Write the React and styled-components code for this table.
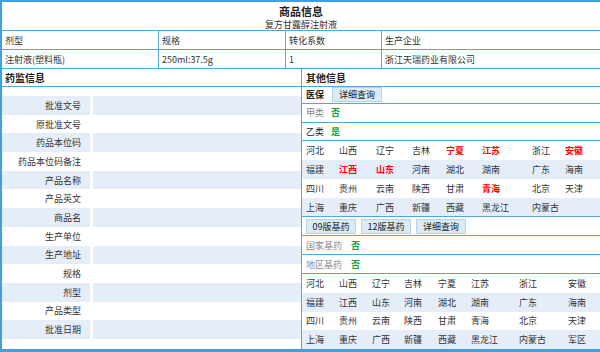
import React from "react";
import styled, { createGlobalStyle } from "styled-components";

const BLUE = "#3f9fe0";
const LINE = "#52a7e3";
const ROW = "#e5edf9";

const Global = createGlobalStyle`
  html, body { margin: 0; padding: 0; background: #fff; }
  body {
    font-family: "Noto Sans CJK SC", "Noto Sans", sans-serif;
    font-size: 9px;
    color: #333;
  }
`;

const Page = styled.div`
  width: 600px;
  height: 352px;
  box-sizing: border-box;
  border-top: 2px solid ${BLUE};
  border-left: 2px solid ${BLUE};
  border-bottom: 3px solid ${BLUE};
  display: flex;
  flex-direction: column;
  overflow: hidden;
`;

const TitleBlock = styled.div`
  height: 29px;
  box-sizing: border-box;
  padding-top: 2px;
  border-bottom: 1px solid ${LINE};
  display: flex;
  flex-direction: column;
  align-items: center;
`;

const Title = styled.div`
  font-size: 11px;
  font-weight: bold;
  line-height: 15px;
  color: #222;
`;

const Subtitle = styled.div`
  font-size: 9px;
  line-height: 11px;
  color: #333;
`;

const InfoGrid = styled.div`
  display: grid;
  grid-template-columns: 157px 127px 96px 1fr;
`;

const InfoCell = styled.div`
  height: 19px;
  box-sizing: border-box;
  border-bottom: 1px solid ${LINE};
  border-right: ${(p) => (p.$last ? "none" : `1px solid ${LINE}`)};
  padding-left: 3px;
  display: flex;
  align-items: center;
  white-space: nowrap;
`;

const Split = styled.div`
  flex: 1;
  display: flex;
  min-height: 0;
`;

const LeftCol = styled.div`
  width: 299px;
  display: flex;
  flex-direction: column;
`;

const RightCol = styled.div`
  flex: 1;
  border-left: 1px solid ${LINE};
  display: flex;
  flex-direction: column;
`;

const SectionHead = styled.div`
  height: 18px;
  box-sizing: border-box;
  border-bottom: 1px solid ${LINE};
  padding-left: ${(p) => p.$pad || 3}px;
  display: flex;
  align-items: center;
  font-size: 10px;
  font-weight: bold;
  color: #222;
`;

const LeftBody = styled.div`
  padding-top: 9px;
  display: flex;
  flex-direction: column;
`;

const FieldRow = styled.div`
  height: 18.7px;
  display: grid;
  grid-template-columns: 88px 1fr;
  column-gap: 3px;
`;

const FieldLabel = styled.div`
  background: ${(p) => (p.$alt ? ROW : "#fff")};
  padding-right: 9px;
  display: flex;
  align-items: center;
  justify-content: flex-end;
  color: #333;
  white-space: nowrap;
`;

const FieldValue = styled.div`
  background: ${(p) => (p.$alt ? ROW : "#fff")};
`;

const BarRow = styled.div`
  height: ${(p) => p.$h || 19}px;
  box-sizing: border-box;
  border-bottom: 1px solid ${LINE};
  padding-left: 4px;
  display: flex;
  align-items: center;
  gap: ${(p) => p.$gap || 0}px;
`;

const Strong = styled.span`
  font-weight: bold;
  color: #222;
  margin-right: 8px;
`;

const Btn = styled.button`
  all: unset;
  box-sizing: border-box;
  width: 50px;
  height: 15px;
  background: #d9eaf8;
  border: 1px solid #b3d4ef;
  font-family: inherit;
  font-size: 9px;
  color: #222;
  display: flex;
  align-items: center;
  justify-content: center;
`;

const Muted = styled.span`
  color: ${(p) => (p.$dark ? "#222" : "#8a8a8a")};
`;

const Flag = styled.span`
  color: #13a33b;
  font-weight: bold;
  margin-left: ${(p) => p.$gap || 7}px;
`;

const ProvGrid = styled.div`
  display: grid;
  grid-template-columns: ${(p) => p.$cols};
  grid-auto-rows: 18.75px;
  border-bottom: ${(p) => (p.$border ? `1px solid ${LINE}` : "none")};
  flex: ${(p) => (p.$fill ? 1 : "none")};
`;

const ProvCell = styled.div`
  background: ${(p) => (p.$alt ? ROW : "#fff")};
  padding-left: 4px;
  display: flex;
  align-items: center;
  white-space: nowrap;
  color: ${(p) => (p.$hot ? "#ff0000" : "#333")};
  font-weight: ${(p) => (p.$hot ? "bold" : "normal")};
`;

const fields = [
  "批准文号",
  "原批准文号",
  "药品本位码",
  "药品本位码备注",
  "产品名称",
  "产品英文",
  "商品名",
  "生产单位",
  "生产地址",
  "规格",
  "剂型",
  "产品类型",
  "批准日期",
];

const provRows = [
  ["河北", "山西", "辽宁", "吉林", "宁夏", "江苏", "浙江", "安徽"],
  ["福建", "江西", "山东", "河南", "湖北", "湖南", "广东", "海南"],
  ["四川", "贵州", "云南", "陕西", "甘肃", "青海", "北京", "天津"],
  ["上海", "重庆", "广西", "新疆", "西藏", "黑龙江", "内蒙古"],
];

const hot1 = new Set(["宁夏", "江苏", "安徽", "江西", "山东", "青海"]);

function Provinces({ cols, hot, extra, border, fill }) {
  const rows = provRows.map((r, i) => (i === 3 ? [...r, extra || ""] : r));
  return (
    <ProvGrid $cols={cols} $border={border} $fill={fill}>
      {rows.map((r, i) =>
        r.map((name, j) => (
          <ProvCell key={`${i}-${j}`} $alt={i % 2 === 1} $hot={hot && hot.has(name)}>
            {name}
          </ProvCell>
        ))
      )}
    </ProvGrid>
  );
}

export default function App() {
  return (
    <>
      <Global />
      <Page>
        <TitleBlock>
          <Title>商品信息</Title>
          <Subtitle>复方甘露醇注射液</Subtitle>
        </TitleBlock>
        <InfoGrid>
          <InfoCell>剂型</InfoCell>
          <InfoCell>规格</InfoCell>
          <InfoCell>转化系数</InfoCell>
          <InfoCell $last>生产企业</InfoCell>
          <InfoCell>注射液(塑料瓶)</InfoCell>
          <InfoCell>250ml:37.5g</InfoCell>
          <InfoCell>1</InfoCell>
          <InfoCell $last>浙江天瑞药业有限公司</InfoCell>
        </InfoGrid>
        <Split>
          <LeftCol>
            <SectionHead>药监信息</SectionHead>
            <LeftBody>
              {fields.map((f, i) => (
                <FieldRow key={f}>
                  <FieldLabel $alt={i % 2 === 0}>{f}</FieldLabel>
                  <FieldValue $alt={i % 2 === 0} />
                </FieldRow>
              ))}
            </LeftBody>
          </LeftCol>
          <RightCol>
            <SectionHead $pad={4}>其他信息</SectionHead>
            <BarRow $h={17}>
              <Strong>医保</Strong>
              <Btn>详细查询</Btn>
            </BarRow>
            <BarRow>
              <Muted>甲类</Muted>
              <Flag>否</Flag>
            </BarRow>
            <BarRow>
              <Muted $dark>乙类</Muted>
              <Flag>是</Flag>
            </BarRow>
            <Provinces
              cols="33px 37px 36px 34px 36px 50px 33px 1fr"
              hot={hot1}
              border
            />
            <BarRow $gap={5}>
              <Btn>09版基药</Btn>
              <Btn>12版基药</Btn>
              <Btn>详细查询</Btn>
            </BarRow>
            <BarRow>
              <Muted>国家基药</Muted>
              <Flag $gap={9}>否</Flag>
            </BarRow>
            <BarRow>
              <Muted>地区基药</Muted>
              <Flag $gap={9}>否</Flag>
            </BarRow>
            <Provinces
              cols="33px 33px 32px 34px 33px 48px 49px 1fr"
              extra="军区"
              fill
            />
          </RightCol>
        </Split>
      </Page>
    </>
  );
}
